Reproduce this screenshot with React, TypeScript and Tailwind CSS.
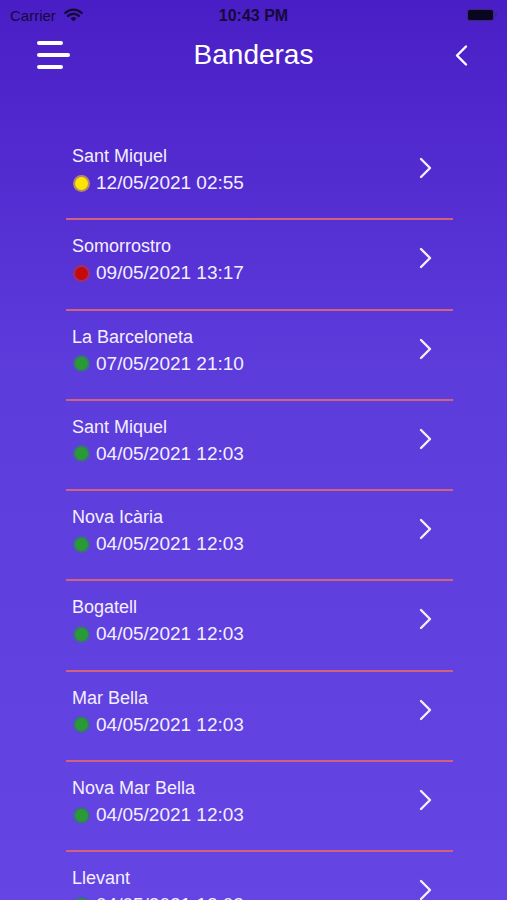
const rows = [
  { name: "Sant Miquel", date: "12/05/2021 02:55", flag: "yellow" },
  { name: "Somorrostro", date: "09/05/2021 13:17", flag: "red" },
  { name: "La Barceloneta", date: "07/05/2021 21:10", flag: "green" },
  { name: "Sant Miquel", date: "04/05/2021 12:03", flag: "green" },
  { name: "Nova Icària", date: "04/05/2021 12:03", flag: "green" },
  { name: "Bogatell", date: "04/05/2021 12:03", flag: "green" },
  { name: "Mar Bella", date: "04/05/2021 12:03", flag: "green" },
  { name: "Nova Mar Bella", date: "04/05/2021 12:03", flag: "green" },
  { name: "Llevant", date: "04/05/2021 12:03", flag: "green" },
];

const dotClass: Record<string, string> = {
  yellow: "bg-[#ffe400] ring-2 ring-[#b08a6a]",
  red: "bg-[#c40a0a] ring-2 ring-[#a0306a]",
  green: "bg-[#2a9a36] ring-2 ring-[#3f6a8a]",
};

function Chevron({ className }: { className?: string }) {
  return (
    <svg viewBox="0 0 13 22" className={className} fill="none">
      <path d="M2 2 L11 11 L2 20" stroke="currentColor" strokeWidth="2.4" strokeLinecap="round" strokeLinejoin="round" />
    </svg>
  );
}

function StatusBar() {
  return (
    <div className="relative flex h-[30px] items-center px-[10px] text-[#140a3a]">
      <div className="flex items-center gap-[8px]">
        <span className="text-[15px] leading-none">Carrier</span>
        <svg viewBox="0 0 20 14" className="h-[14px] w-[19px]">
          <path d="M10 13.8 L6.9 10.6 A4.4 4.4 0 0 1 13.1 10.6 Z" fill="currentColor" />
          <path d="M4.3 7.9 A8.2 8.2 0 0 1 15.7 7.9" stroke="currentColor" strokeWidth="2.6" fill="none" strokeLinecap="round" />
          <path d="M1.5 4.8 A12.2 12.2 0 0 1 18.5 4.8" stroke="currentColor" strokeWidth="2.6" fill="none" strokeLinecap="round" />
        </svg>
      </div>
      <span className="absolute left-1/2 top-[8px] -translate-x-1/2 text-[16px] font-semibold leading-none">10:43 PM</span>
      <div className="ml-auto flex items-center">
        <div className="h-[12px] w-[27px] rounded-[3px] border border-[#3a2a7a] bg-[#0a0520]" />
        <div className="ml-px h-[4px] w-[2px] rounded-r-sm bg-[#3a2a7a]" />
      </div>
    </div>
  );
}

export default function App() {
  return (
    <div
      className="min-h-[900px] w-[507px] overflow-hidden bg-[linear-gradient(180deg,#4a1ec6_0%,#5d3cdc_40%,#6545e4_100%)] text-[#f3efff]"
      style={{ fontFamily: '"Liberation Sans", Arial, sans-serif' }}
    >
      <StatusBar />
      <div className="flex h-[50px] items-center px-[37px]">
        <div className="flex w-[34px] flex-col gap-[8px]">
          <span className="h-[4px] w-[26px] rounded-full bg-white" />
          <span className="h-[4px] w-[33px] rounded-full bg-white" />
          <span className="h-[4px] w-[26px] rounded-full bg-white" />
        </div>
        <h1 className="flex-1 text-center text-[28px] leading-none text-white">Banderas</h1>
        <div className="flex w-[34px] justify-end pr-[2px]">
          <Chevron className="h-[23px] w-[13px] -scale-x-100 text-white" />
        </div>
      </div>
      <div className="ml-[66px] mt-[50px] w-[387px]">
        {rows.map((r, i) => (
          <div key={i} className="flex h-[90.3px] border-b-2 border-[#d2627c] pl-[6px]">
            <div className="flex-1 pt-[15px]">
              <div className="text-[18px] leading-[22px]">{r.name}</div>
              <div className="mt-[5px] flex items-center text-[19px] leading-[22px]">
                <span className={"ml-[3px] mr-[8px] inline-block h-[13px] w-[13px] rounded-full " + dotClass[r.flag]} />
                {r.date}
              </div>
            </div>
            <Chevron className="mr-[21px] mt-[27px] h-[22px] w-[13px] text-[#f3efff]" />
          </div>
        ))}
      </div>
    </div>
  );
}
